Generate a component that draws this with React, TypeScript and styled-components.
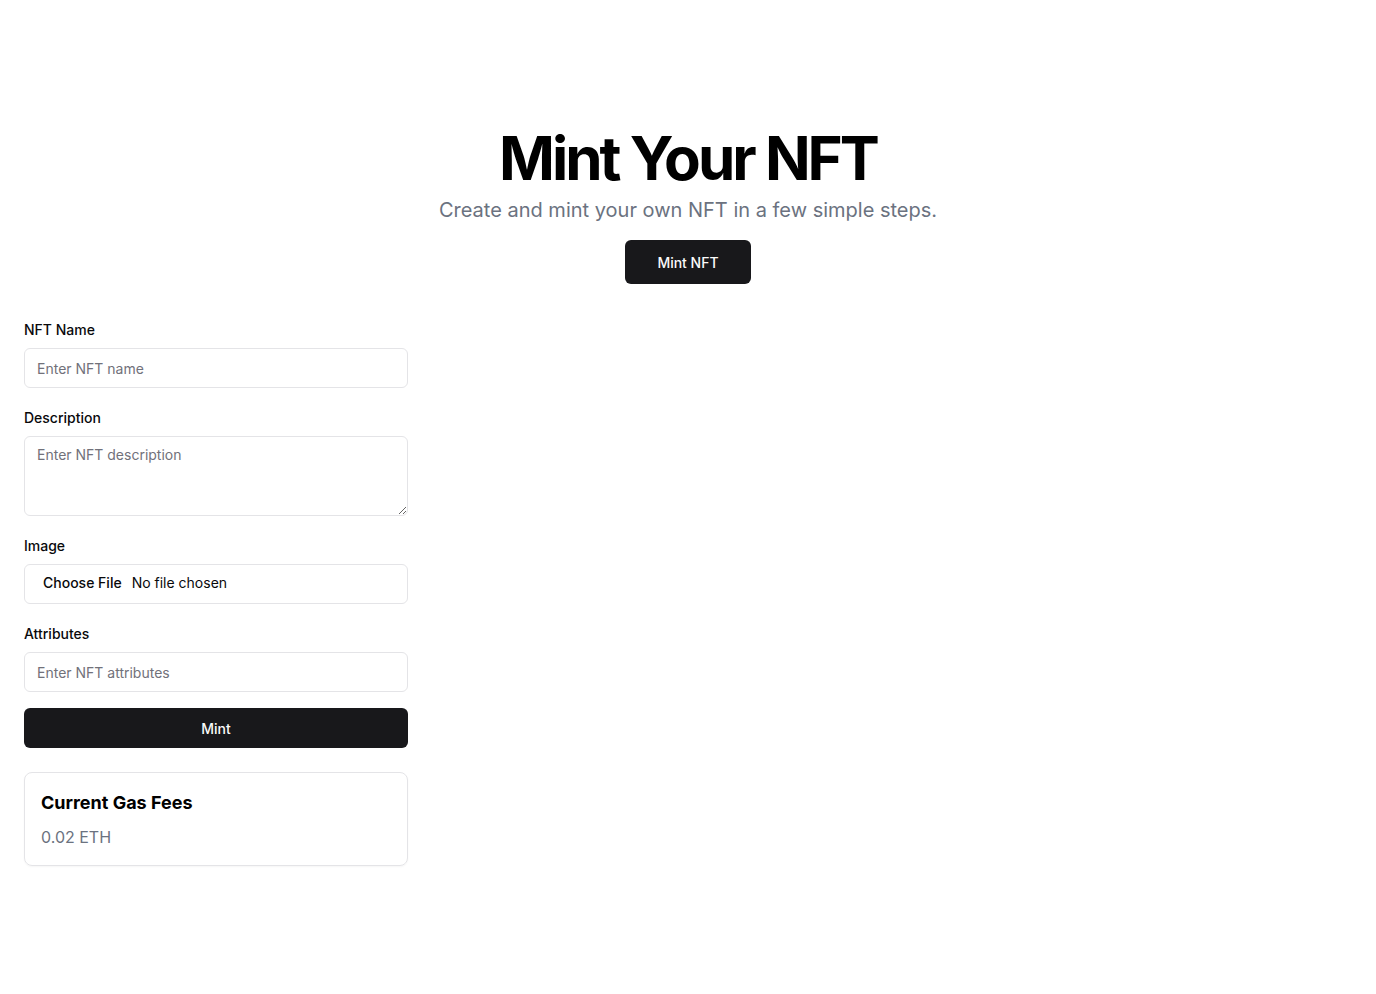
import * as React from 'react';
import styled, { createGlobalStyle } from 'styled-components';

const GlobalStyle = createGlobalStyle`
  * { box-sizing: border-box; }
  body {
    margin: 0;
    background: #ffffff;
    color: #09090b;
    font-family: Inter, "Noto Sans", "Liberation Sans", sans-serif;
  }
`;

const Page = styled.div`
  min-height: 994px;
  padding: 128px 24px 48px;
`;

const Hero = styled.section`
  display: flex;
  flex-direction: column;
  align-items: center;
  text-align: center;
`;

const Title = styled.h1`
  margin: 0;
  font-size: 60px;
  line-height: 60px;
  font-weight: 700;
  letter-spacing: -0.05em;
  color: #000;
`;

const Subtitle = styled.p`
  margin: 8px 0 0;
  font-size: 20px;
  line-height: 28px;
  color: #6b7280;
`;

const Button = styled.button<{ $full?: boolean }>`
  display: inline-flex;
  align-items: center;
  justify-content: center;
  height: ${p => (p.$full ? '40px' : '44px')};
  padding: 0 32px;
  width: ${p => (p.$full ? '100%' : 'auto')};
  border: none;
  border-radius: 6px;
  background: #18181b;
  color: #fafafa;
  font-family: inherit;
  font-size: 14px;
  font-weight: 500;
  cursor: pointer;
`;

const HeroButton = styled(Button)`
  margin-top: 16px;
`;

const Form = styled.form`
  margin-top: 36px;
  width: 384px;
  display: flex;
  flex-direction: column;
  gap: 20px;
`;

const Field = styled.div`
  display: flex;
  flex-direction: column;
  gap: 8px;
`;

const Label = styled.label`
  font-size: 14px;
  line-height: 20px;
  font-weight: 500;
  color: #09090b;
`;

const fieldBase = `
  width: 100%;
  border: 1px solid #e4e4e7;
  border-radius: 6px;
  background: #fff;
  font-family: inherit;
  font-size: 14px;
  color: #09090b;
  outline: none;
  &::placeholder { color: #71717a; }
`;

const Input = styled.input`
  ${fieldBase}
  height: 40px;
  padding: 8px 12px;

  &::file-selector-button {
    border: 0;
    background: transparent;
    font-family: inherit;
    font-size: 14px;
    font-weight: 500;
    color: #09090b;
  }
`;

const TextArea = styled.textarea`
  ${fieldBase}
  height: 80px;
  padding: 8px 12px;
  line-height: 20px;
`;

const Actions = styled.div`
  margin-top: -4px;
`;

const Card = styled.div`
  margin-top: 4px;
  border: 1px solid #e4e4e7;
  border-radius: 8px;
  padding: 16px;
  box-shadow: 0 1px 2px rgba(0, 0, 0, 0.04);
`;

const CardTitle = styled.h3`
  margin: 0;
  font-size: 18px;
  line-height: 28px;
  font-weight: 700;
  color: #000;
`;

const CardValue = styled.p`
  margin: 8px 0 0;
  font-size: 16px;
  line-height: 24px;
  color: #6b7280;
`;

export default function App() {
  return (
    <>
      <GlobalStyle />
      <Page>
        <Hero>
          <Title>Mint Your NFT</Title>
          <Subtitle>Create and mint your own NFT in a few simple steps.</Subtitle>
          <HeroButton type="button">Mint NFT</HeroButton>
        </Hero>
        <Form onSubmit={e => e.preventDefault()}>
          <Field>
            <Label htmlFor="name">NFT Name</Label>
            <Input id="name" placeholder="Enter NFT name" />
          </Field>
          <Field>
            <Label htmlFor="description">Description</Label>
            <TextArea id="description" placeholder="Enter NFT description" />
          </Field>
          <Field>
            <Label htmlFor="image">Image</Label>
            <Input id="image" type="file" />
          </Field>
          <Field>
            <Label htmlFor="attributes">Attributes</Label>
            <Input id="attributes" placeholder="Enter NFT attributes" />
          </Field>
          <Actions>
            <Button $full type="submit">Mint</Button>
          </Actions>
          <Card>
            <CardTitle>Current Gas Fees</CardTitle>
            <CardValue>0.02 ETH</CardValue>
          </Card>
        </Form>
      </Page>
    </>
  );
}
